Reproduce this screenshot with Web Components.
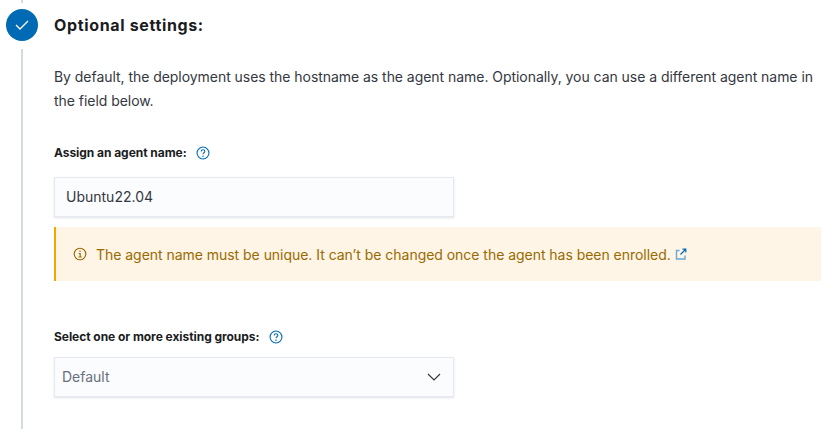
<!DOCTYPE html>
<html>
<head>
<meta charset="utf-8">
<style>
  html, body { margin: 0; padding: 0; background: #fff; }
  body { width: 833px; height: 432px; overflow: hidden; font-family: Inter, sans-serif; color: #343741; }
</style>
</head>
<body>
<template id="help-tpl">
  <style>
    :host { display: inline-flex; width: 14px; height: 14px; color: #006bb4; }
    svg { width: 14px; height: 14px; display: block; }
  </style>
  <svg viewBox="0 0 16 16" fill="none" stroke="currentColor">
    <circle cx="8" cy="8" r="6.8" stroke-width="1.25"/>
    <path d="M5.9 6.2c0-1.2 1-2 2.1-2s2.1.8 2.1 1.9c0 1.7-2.1 1.6-2.1 3.4" stroke-width="1.25"/>
    <circle cx="8" cy="11.6" r=".85" fill="currentColor" stroke="none"/>
  </svg>
</template>

<step-item title="Optional settings:">
  <p-text>By default, the deployment uses the hostname as the agent name. Optionally, you can use a different agent name in the field below.</p-text>
  <form-row label="Assign an agent name:" style="margin-top:32px">
    <text-field value="Ubuntu22.04"></text-field>
  </form-row>
  <call-out>The agent name must be unique. It can’t be changed once the agent has been enrolled.</call-out>
  <form-row label="Select one or more existing groups:" gap="12" style="margin-top:48px">
    <select-field value="Default"></select-field>
  </form-row>
</step-item>

<script>
class HelpIcon extends HTMLElement {
  constructor () {
    super()
    this.attachShadow({ mode: 'open' }).appendChild(document.getElementById('help-tpl').content.cloneNode(true))
  }
}

class StepItem extends HTMLElement {
  constructor () {
    super()
    this.attachShadow({ mode: 'open' }).innerHTML = `
      <style>
        :host { display: grid; grid-template-columns: 54px 1fr; height: 429px; }
        .rail { display: flex; flex-direction: column; align-items: center; width: 44px; }
        .top { width: 2px; height: 3px; background: #d3dae6; margin-bottom: 6px; flex: none; }
        .circle { width: 32px; height: 32px; border-radius: 50%; background: #006bb4; display: flex; align-items: center; justify-content: center; flex: none; }
        .line { width: 2px; flex: 1; background: #d3dae6; margin-top: 8px; }
        .body { min-width: 0; padding-top: 13px; }
        h2 { margin: 0 0 28px; font: 700 16px/24px Inter, sans-serif; letter-spacing: .65px; color: #1a1c21; }
      </style>
      <div class="rail">
        <div class="top"></div>
        <div class="circle">
          <svg width="16" height="16" viewBox="0 0 16 16" fill="none" stroke="#fff" stroke-width="1.3"><path d="M2 8l4 4 8-8"/></svg>
        </div>
        <div class="line"></div>
      </div>
      <div class="body">
        <h2></h2>
        <slot></slot>
      </div>`
    this.shadowRoot.querySelector('h2').textContent = this.getAttribute('title')
  }
}

class PText extends HTMLElement {
  constructor () {
    super()
    this.attachShadow({ mode: 'open' }).innerHTML = `
      <style>
        :host { display: block; font: 400 14px/24px Inter, sans-serif; letter-spacing: -.045px; color: #343741; }
      </style>
      <slot></slot>`
  }
}

class FormRow extends HTMLElement {
  constructor () {
    super()
    const gap = this.getAttribute('gap') || 16
    this.attachShadow({ mode: 'open' }).innerHTML = `
      <style>
        :host { display: block; }
        .label { display: flex; align-items: center; gap: 9.5px; height: 16px; margin-bottom: ${gap}px; font: 700 12px/16px Inter, sans-serif; letter-spacing: -.05px; color: #1a1c21; }
      </style>
      <div class="label"><span></span><help-icon></help-icon></div>
      <slot></slot>`
    this.shadowRoot.querySelector('span').textContent = this.getAttribute('label')
  }
}

class TextField extends HTMLElement {
  constructor () {
    super()
    this.attachShadow({ mode: 'open' }).innerHTML = `
      <style>
        :host { display: flex; align-items: center; box-sizing: border-box; width: 400px; height: 40px; padding: 0 11px 2px; background: #fbfcfd; border: 1px solid #e6e9f0; box-shadow: 0 1px 2px rgba(152,162,179,.3); font: 400 14px Inter, sans-serif; color: #343741; }
      </style>
      <span></span>`
    this.shadowRoot.querySelector('span').textContent = this.getAttribute('value')
  }
}

class SelectField extends HTMLElement {
  constructor () {
    super()
    this.attachShadow({ mode: 'open' }).innerHTML = `
      <style>
        :host { display: flex; align-items: center; justify-content: space-between; box-sizing: border-box; width: 400px; height: 40px; padding: 0 12px 0 7px; background: #fbfcfd; border: 1px solid #e6e9f0; box-shadow: 0 1px 2px rgba(152,162,179,.3); font: 400 14px Inter, sans-serif; color: #69707d; }
        span { margin-bottom: 2px; }
        svg { display: block; }
      </style>
      <span></span>
      <svg width="14" height="8" viewBox="0 0 14 8" fill="none" stroke="#343741" stroke-width="1.2"><path d="M1 1l6 6 6-6"/></svg>`
    this.shadowRoot.querySelector('span').textContent = this.getAttribute('value')
  }
}

class CallOut extends HTMLElement {
  constructor () {
    super()
    this.attachShadow({ mode: 'open' }).innerHTML = `
      <style>
        :host { display: flex; align-items: center; gap: 9px; box-sizing: border-box; width: 767px; height: 54px; margin-top: 10px; padding-left: 17px; background: #fef5e6; border-left: 2px solid #f5a700; font: 400 14px Inter, sans-serif; letter-spacing: -.035px; color: #996a00; }
        svg { display: block; flex: none; }
        .ext { margin-left: -5px; }
      </style>
      <svg width="14" height="14" viewBox="0 0 16 16" fill="none" stroke="#996a00" stroke-width="1.3">
        <circle cx="8" cy="8" r="6.6"/><path d="M6.5 7.4h1.7v4M6.3 11.4h3.6"/><circle cx="8" cy="4.8" r=".9" fill="#996a00" stroke="none"/>
      </svg>
      <span><slot></slot></span>
      <svg class="ext" width="12" height="12" viewBox="0 0 12 12" fill="none">
        <path d="M4.5 2.5H1.5v8.5h8.5V7.5" stroke="#6ba6d2" stroke-width="1.4"/><path d="M5.5 6.5L10.5 1.5M7.5 1.2h3.3v3.3" stroke="#006bb4" stroke-width="1.2"/>
      </svg>`
  }
}

customElements.define('help-icon', HelpIcon)
customElements.define('step-item', StepItem)
customElements.define('p-text', PText)
customElements.define('form-row', FormRow)
customElements.define('text-field', TextField)
customElements.define('select-field', SelectField)
customElements.define('call-out', CallOut)
</script>
</body>
</html>
